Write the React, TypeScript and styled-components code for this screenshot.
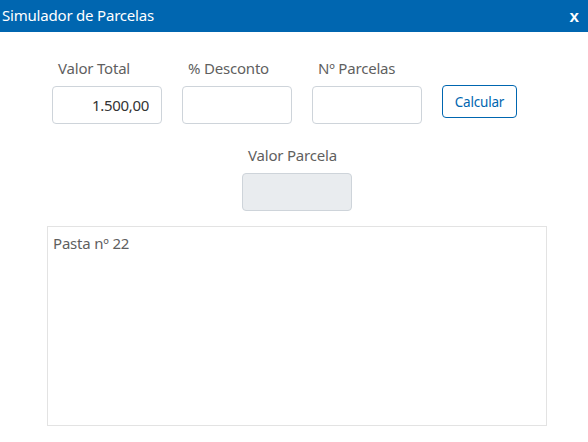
import React from 'react'
import { createGlobalStyle, styled } from 'styled-components'

const GlobalStyles = createGlobalStyle`
  html, body {
    margin: 0;
    padding: 0;
    background: #fff;
  }
  body {
    font-family: 'Noto Sans', 'Open Sans', sans-serif;
  }
`

const Modal = styled.div`
  width: 588px;
  height: 442px;
  display: flex;
  flex-direction: column;
  overflow: hidden;
`

const TitleBar = styled.div`
  height: 32px;
  background: #0066b0;
  color: #fff;
  display: flex;
  align-items: center;
  justify-content: space-between;
  padding: 0 9px 0 2px;
  box-sizing: border-box;
  flex-shrink: 0;
`

const Title = styled.span`
  font-size: 15px;
  letter-spacing: -0.2px;
  margin-top: -2px;
`

const CloseButton = styled.span`
  font-family: 'Liberation Sans', Arial, sans-serif;
  font-weight: bold;
  font-size: 17px;
  line-height: 1;
  margin-top: 1px;
`

const Body = styled.div`
  padding: 26px 0 0 47px;
  display: flex;
  flex-direction: column;
`

const FieldRow = styled.div`
  display: flex;
  align-items: flex-end;
  gap: 20px;
  margin-left: 5px;
`

const Field = styled.div`
  display: flex;
  flex-direction: column;
  width: 110px;
`

const Label = styled.label`
  color: #5f5f5f;
  font-size: 15px;
  padding-left: 6px;
  height: 28px;
  line-height: 20px;
  letter-spacing: -0.2px;
  white-space: nowrap;
`

const Input = styled.input<{ $disabled?: boolean }>`
  box-sizing: border-box;
  width: 110px;
  height: 38px;
  border: 1px solid #ced4da;
  border-radius: 4px;
  background: ${p => (p.$disabled ? '#e9ecef' : '#fff')};
  font-family: 'Noto Sans', 'Open Sans', sans-serif;
  font-size: 15px;
  color: #333;
  text-align: right;
  padding: 0 12px 0 8px;
  letter-spacing: -0.3px;
  outline: none;
`

const CalcButton = styled.button`
  box-sizing: border-box;
  width: 75px;
  height: 33px;
  margin-bottom: 6px;
  border: 1px solid #0066b0;
  border-radius: 4px;
  background: #fff;
  color: #0066b0;
  font-family: 'Noto Sans', 'Open Sans', sans-serif;
  font-size: 13.5px;
  padding: 0;
  letter-spacing: -0.2px;
`

const ResultRow = styled.div`
  display: flex;
  justify-content: center;
  width: 500px;
  margin-top: 21px;
`

const NotesBox = styled.div`
  box-sizing: border-box;
  width: 500px;
  height: 200px;
  margin-top: 15px;
  border: 1px solid #e3e3e3;
  padding: 6px 5px;
  color: #5f5f5f;
  font-size: 15px;
  letter-spacing: -0.2px;
`

export default function App() {
  return (
    <>
      <GlobalStyles />
      <Modal>
        <TitleBar>
          <Title>Simulador de Parcelas</Title>
          <CloseButton>x</CloseButton>
        </TitleBar>
        <Body>
          <FieldRow>
            <Field>
              <Label>Valor Total</Label>
              <Input defaultValue="1.500,00" />
            </Field>
            <Field>
              <Label>% Desconto</Label>
              <Input />
            </Field>
            <Field>
              <Label>Nº Parcelas</Label>
              <Input />
            </Field>
            <CalcButton>Calcular</CalcButton>
          </FieldRow>
          <ResultRow>
            <Field>
              <Label>Valor Parcela</Label>
              <Input $disabled readOnly />
            </Field>
          </ResultRow>
          <NotesBox>Pasta nº 22</NotesBox>
        </Body>
      </Modal>
    </>
  )
}
